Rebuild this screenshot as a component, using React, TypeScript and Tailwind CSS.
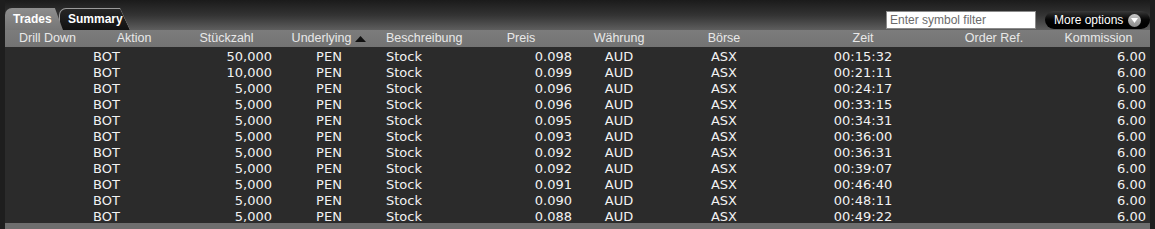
import React from "react";

type Trade = {
  qty: string;
  price: string;
  time: string;
};

const trades: Trade[] = [
  { qty: "50,000", price: "0.098", time: "00:15:32" },
  { qty: "10,000", price: "0.099", time: "00:21:11" },
  { qty: "5,000", price: "0.096", time: "00:24:17" },
  { qty: "5,000", price: "0.096", time: "00:33:15" },
  { qty: "5,000", price: "0.095", time: "00:34:31" },
  { qty: "5,000", price: "0.093", time: "00:36:00" },
  { qty: "5,000", price: "0.092", time: "00:36:31" },
  { qty: "5,000", price: "0.092", time: "00:39:07" },
  { qty: "5,000", price: "0.091", time: "00:46:40" },
  { qty: "5,000", price: "0.090", time: "00:48:11" },
  { qty: "5,000", price: "0.088", time: "00:49:22" },
];

// column widths, same for header and rows
const cols = "grid grid-cols-[85px_88px_97px_108px_84px_108px_88px_122px_156px_106px_103px]";

const App: React.FC = () => {
  return (
    <div className="w-[1155px] h-[229px] bg-[#1e1e1e] flex flex-col px-[5px] overflow-hidden font-['Liberation_Sans',Arial,sans-serif]">
      {/* Top bar with tabs + filter */}
      <div className="h-[30px] shrink-0 flex items-end bg-gradient-to-b from-[#1b1b1b] via-[#333333] to-[#5e5e5e]">
        <div className="flex items-end h-[22px]">
          <div className="relative z-10 h-[22px] w-[58px] pl-[8px] pt-[3px] rounded-tl-[7px] bg-gradient-to-b from-[#8e8e8e] to-[#767676] [clip-path:polygon(0_0,86%_0,100%_100%,0_100%)] text-white font-bold text-[12px] leading-[16px]">
            Trades
          </div>
          <div className="-ml-[4px] h-[22px] w-[71px] bg-[#9a9a9a] rounded-tl-[7px] rounded-tr-[4px] [clip-path:polygon(0_0,86%_0,100%_100%,0_100%)] pt-px pl-px">
            <div className="h-full w-full bg-gradient-to-b from-[#262626] to-[#121212] rounded-tl-[6px] [clip-path:polygon(0_0,86%_0,100%_100%,0_100%)] pl-[8px] pt-[2px] text-white font-bold text-[12px] leading-[16px]">
              Summary
            </div>
          </div>
        </div>
        <div className="ml-auto self-start mt-[11px] flex items-center gap-[9px]">
          <div className="w-[150px] h-[18px] bg-white border border-[#8a8a8a] px-[3px] text-[12px] leading-[16px] text-[#6b6b6b]">
            Enter symbol filter
          </div>
          <button className="h-[18px] w-[105px] rounded-full bg-gradient-to-b from-[#3a3a3a] via-[#050505] to-[#000000] flex items-center pl-[9px] gap-[5px] text-white text-[12px] leading-[16px]">
            More options
            <span className="w-[13px] h-[13px] rounded-full bg-gradient-to-b from-[#c8c8c8] to-[#8a8a8a] flex items-center justify-center">
              <svg width="7" height="5" viewBox="0 0 7 5">
                <polygon points="0,0 7,0 3.5,5" fill="#ffffff" />
              </svg>
            </span>
          </button>
        </div>
      </div>

      {/* Column header */}
      <div className={`${cols} h-[17px] shrink-0 bg-gradient-to-b from-[#7c7c7c] to-[#737373] text-[#e8e8e8] text-[12.5px] leading-[17px]`}>
        <div className="text-center">Drill Down</div>
        <div className="text-center">Aktion</div>
        <div className="text-center">Stückzahl</div>
        <div className="flex items-center justify-center gap-[4px]">
          Underlying
          <svg width="11" height="6" viewBox="0 0 11 6">
            <polygon points="5.5,0 11,6 0,6" fill="#111111" />
          </svg>
        </div>
        <div className="pl-[3px]">Beschreibung</div>
        <div className="text-center">Preis</div>
        <div className="text-center">Währung</div>
        <div className="text-center">Börse</div>
        <div className="text-center">Zeit</div>
        <div className="text-center">Order Ref.</div>
        <div className="text-center">Kommission</div>
      </div>

      {/* Rows */}
      <div className="bg-[#2b2b2b] shrink-0 font-['DejaVu_Sans',Verdana,sans-serif] text-[13px] leading-[13px] text-[#f2f2f2]">
        {trades.map((t, i) => (
          <div key={i} className={`${cols} h-[16px] pt-[3px]`}>
            <div></div>
            <div className="pl-[3px]">BOT</div>
            <div className="text-right pr-[3px]">{t.qty}</div>
            <div className="text-center">PEN</div>
            <div className="pl-[3px]">Stock</div>
            <div className="text-right pr-[3px]">{t.price}</div>
            <div className="text-center">AUD</div>
            <div className="text-center">ASX</div>
            <div className="text-center">{t.time}</div>
            <div></div>
            <div className="text-right pr-[4px]">6.00</div>
          </div>
        ))}
      </div>

      {/* bottom strip */}
      <div className="flex-1 bg-[#6e6e6e]"></div>
    </div>
  );
};

export default App;
